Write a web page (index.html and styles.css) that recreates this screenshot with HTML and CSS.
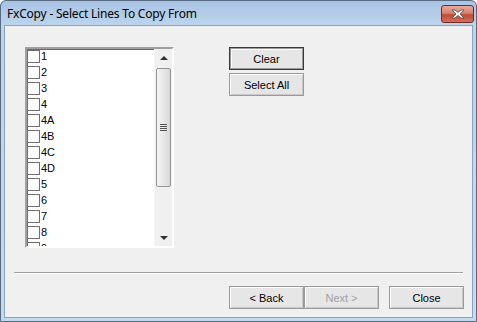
FILE: index.html
```html
<!DOCTYPE html>
<html lang="en">
<head>
    <meta charset="UTF-8">
    <title>FxCopy - Select Lines To Copy From</title>
    <link rel="stylesheet" href="styles.css">
</head>
<body>
<div class="window">
    <div class="titlebar">
        <span class="title">FxCopy - Select Lines To Copy From</span>
        <div class="close-btn">
            <svg width="16" height="10" viewBox="0 0 16 10">
                <path d="M2 1 L5 1 L8 3.5 L11 1 L14 1 L10 5 L14 9 L11 9 L8 6.5 L5 9 L2 9 L6 5 Z" fill="#fff" stroke="#4a4a4a" stroke-width="0.8"/>
            </svg>
        </div>
    </div>
    <div class="client">
        <div class="top-area">
            <div class="listbox">
                <div class="items">
                    <div class="item"><span class="check"></span>1</div>
                    <div class="item"><span class="check"></span>2</div>
                    <div class="item"><span class="check"></span>3</div>
                    <div class="item"><span class="check"></span>4</div>
                    <div class="item"><span class="check"></span>4A</div>
                    <div class="item"><span class="check"></span>4B</div>
                    <div class="item"><span class="check"></span>4C</div>
                    <div class="item"><span class="check"></span>4D</div>
                    <div class="item"><span class="check"></span>5</div>
                    <div class="item"><span class="check"></span>6</div>
                    <div class="item"><span class="check"></span>7</div>
                    <div class="item"><span class="check"></span>8</div>
                    <div class="item"><span class="check"></span>9</div>
                </div>
                <div class="scrollbar">
                    <div class="arrow"><span class="tri-up"></span></div>
                    <div class="track">
                        <div class="thumb"><span class="grip"></span></div>
                    </div>
                    <div class="arrow"><span class="tri-down"></span></div>
                </div>
            </div>
            <div class="side-buttons">
                <button class="btn default">Clear</button>
                <button class="btn">Select All</button>
            </div>
        </div>
        <div class="separator"></div>
        <div class="footer">
            <button class="btn">&lt; Back</button>
            <button class="btn" disabled>Next &gt;</button>
            <button class="btn close">Close</button>
        </div>
    </div>
</div>
</body>
</html>
```

FILE: styles.css
```css
body {
    margin: 0;
    background: #fff;
}

.window {
    width: 477px;
    height: 322px;
    box-sizing: border-box;
    border: 1px solid #566a82;
    border-radius: 6px 6px 0 0;
    background: linear-gradient(#a8c4e3, #bcd4ec 24px, #c4daef);
    padding: 0 3px 3px 3px;
    display: flex;
    flex-direction: column;
}

.titlebar {
    height: 24px;
    display: flex;
    align-items: flex-start;
    justify-content: space-between;
}

.title {
    font-family: "Segoe UI", "Noto Sans", sans-serif;
    font-size: 12px;
    letter-spacing: -0.2px;
    color: #000;
    margin: 4px 0 0 3px;
}

.close-btn {
    width: 31px;
    height: 16px;
    margin: 4px -1px 0 0;
    border: 1px solid #6d2b22;
    border-radius: 3px;
    background: linear-gradient(#e9a99c, #d7806f 45%, #c24a36 55%, #d2705d);
    display: flex;
    align-items: center;
    justify-content: center;
}

.client {
    flex: 1;
    background: #f0f0f0;
    border: 1px solid #8ca3bc;
    display: flex;
    flex-direction: column;
}

.top-area {
    display: flex;
    padding: 21px 0 0 20px;
}

.listbox {
    width: 149px;
    height: 201px;
    box-sizing: border-box;
    border-style: solid;
    border-width: 2px;
    border-color: #a0a0a0 #fff #fff #a0a0a0;
    box-shadow: inset 1px 1px 0 #696969;
    background: #fff;
    display: flex;
    overflow: hidden;
}

.items {
    flex: 1;
    margin-top: -1px;
    overflow: hidden;
}

.item {
    height: 16px;
    display: flex;
    align-items: center;
    font-family: "Liberation Sans", Arial, sans-serif;
    font-size: 11px;
    color: #000;
}

.check {
    width: 11px;
    height: 11px;
    border: 1px solid #707070;
    background: #fff;
    margin-right: 1px;
}

.scrollbar {
    width: 17px;
    display: flex;
    flex-direction: column;
    background: #f0f0f0;
    border-left: 1px solid #f7f7f7;
}

.arrow {
    height: 17px;
    display: flex;
    align-items: center;
    justify-content: center;
}

.tri-up {
    border-left: 4px solid transparent;
    border-right: 4px solid transparent;
    border-bottom: 4px solid #333;
}

.tri-down {
    border-left: 4px solid transparent;
    border-right: 4px solid transparent;
    border-top: 4px solid #333;
}

.track {
    flex: 1;
    padding-top: 2px;
}

.thumb {
    height: 117px;
    margin: 0 1px;
    border: 1px solid #959595;
    border-radius: 2px;
    background: linear-gradient(90deg, #f3f3f3, #e8e8e8 50%, #d8d8d8);
    display: flex;
    align-items: center;
    justify-content: center;
}

.grip {
    width: 7px;
    height: 7px;
    background: repeating-linear-gradient(#555 0 1px, transparent 1px 2px);
}

.side-buttons {
    display: flex;
    flex-direction: column;
    gap: 3px;
    margin-left: 55px;
}

.btn {
    width: 75px;
    height: 23px;
    padding: 0;
    font-family: "Liberation Sans", Arial, sans-serif;
    font-size: 11px;
    color: #000;
    background: #e6e6e6;
    border: 1px solid #9a9a9a;
    border-radius: 0;
    box-shadow: inset 1px 1px 0 #fff, inset -1px -1px 0 #c8c8c8;
}

.btn.default {
    border: 1px solid #3a3a3a;
    box-shadow: inset 0 0 0 1px #9a9a9a, inset 2px 2px 0 #fff;
}

.btn:disabled {
    color: #a0a0a0;
}

.separator {
    height: 1px;
    margin: 24px 9px 0 9px;
    background: #a0a0a0;
    border-bottom: 1px solid #fff;
}

.footer {
    display: flex;
    margin: 12px 0 0 224px;
}

.btn.close {
    margin-left: 10px;
}
```
